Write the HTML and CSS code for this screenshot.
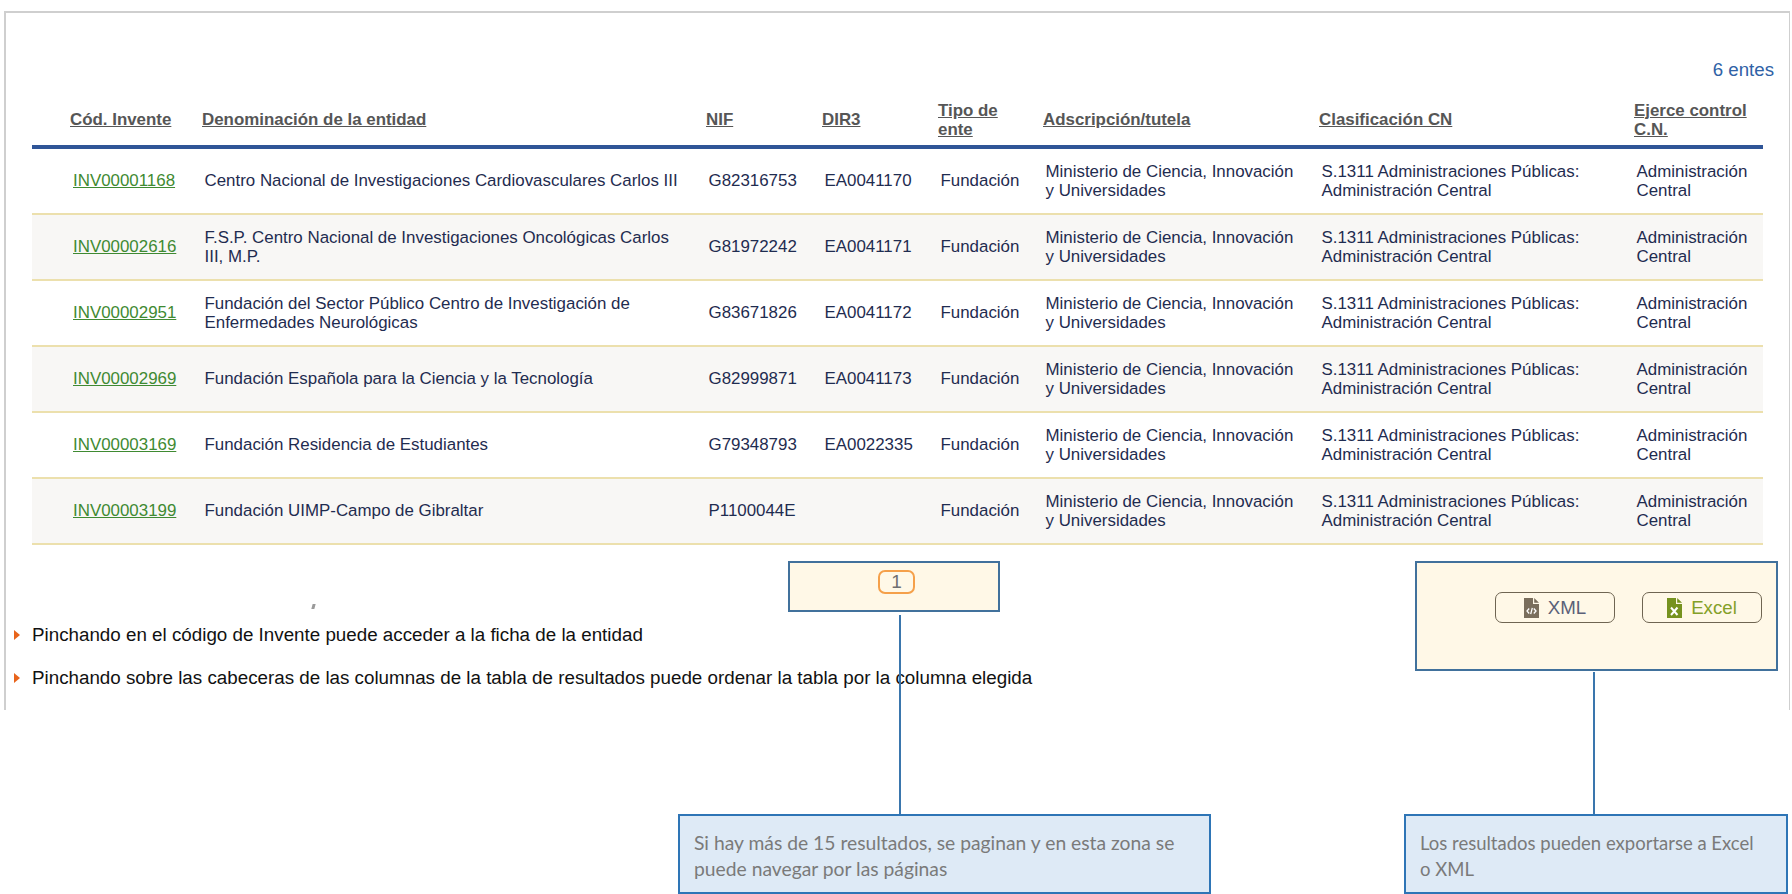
FILE: index.html
```html
<!DOCTYPE html>
<html lang="es">
<head>
<meta charset="utf-8">
<title>Resultados</title>
<link rel="stylesheet" href="styles.css">
</head>
<body>
<main class="frame">
  <p class="count">6 entes</p>
  <table class="results">
    <colgroup>
      <col class="c1"><col class="c2"><col class="c3"><col class="c4"><col class="c5"><col class="c6"><col class="c7"><col class="c8">
    </colgroup>
    <thead>
      <tr>
        <th><a href="#">Cód. Invente</a></th>
        <th><a href="#">Denominación de la entidad</a></th>
        <th><a href="#">NIF</a></th>
        <th><a href="#">DIR3</a></th>
        <th><a href="#">Tipo de ente</a></th>
        <th><a href="#">Adscripción/tutela</a></th>
        <th><a href="#">Clasificación CN</a></th>
        <th><a href="#">Ejerce control C.N.</a></th>
      </tr>
    </thead>
    <tbody>
      <tr><td><a href="#">INV00001168</a></td><td>Centro Nacional de Investigaciones Cardiovasculares Carlos III</td><td>G82316753</td><td>EA0041170</td><td>Fundación</td><td>Ministerio de Ciencia, Innovación y Universidades</td><td>S.1311 Administraciones Públicas: Administración Central</td><td>Administración Central</td></tr>
      <tr><td><a href="#">INV00002616</a></td><td>F.S.P. Centro Nacional de Investigaciones Oncológicas Carlos III, M.P.</td><td>G81972242</td><td>EA0041171</td><td>Fundación</td><td>Ministerio de Ciencia, Innovación y Universidades</td><td>S.1311 Administraciones Públicas: Administración Central</td><td>Administración Central</td></tr>
      <tr><td><a href="#">INV00002951</a></td><td>Fundación del Sector Público Centro de Investigación de Enfermedades Neurológicas</td><td>G83671826</td><td>EA0041172</td><td>Fundación</td><td>Ministerio de Ciencia, Innovación y Universidades</td><td>S.1311 Administraciones Públicas: Administración Central</td><td>Administración Central</td></tr>
      <tr><td><a href="#">INV00002969</a></td><td>Fundación Española para la Ciencia y la Tecnología</td><td>G82999871</td><td>EA0041173</td><td>Fundación</td><td>Ministerio de Ciencia, Innovación y Universidades</td><td>S.1311 Administraciones Públicas: Administración Central</td><td>Administración Central</td></tr>
      <tr><td><a href="#">INV00003169</a></td><td>Fundación Residencia de Estudiantes</td><td>G79348793</td><td>EA0022335</td><td>Fundación</td><td>Ministerio de Ciencia, Innovación y Universidades</td><td>S.1311 Administraciones Públicas: Administración Central</td><td>Administración Central</td></tr>
      <tr><td><a href="#">INV00003199</a></td><td>Fundación UIMP-Campo de Gibraltar</td><td>P1100044E</td><td></td><td>Fundación</td><td>Ministerio de Ciencia, Innovación y Universidades</td><td>S.1311 Administraciones Públicas: Administración Central</td><td>Administración Central</td></tr>
    </tbody>
  </table>
  <ul class="notes">
    <li>Pinchando en el código de Invente puede acceder a la ficha de la entidad</li>
    <li>Pinchando sobre las cabeceras de las columnas de la tabla de resultados puede ordenar la tabla por la columna elegida</li>
  </ul>
</main>

<span class="speck"></span>

<div class="highlight pager-box"><span class="page-chip">1</span></div>
<div class="highlight export-box">
  <a class="export xml" href="#">
    <svg class="file-icon" viewBox="0 0 15 20" aria-hidden="true"><path fill="#7a6e5c" d="M0 0h9v6h6v14H0z"/><path fill="#7a6e5c" d="M10.2 0 15 4.8h-4.8z"/><path fill="none" stroke="#fff" stroke-width="1.3" d="M5.2 10.5 3 13l2.200 2.500M9.800 10.500 12 13l-2.200 2.500M8.300 9.800l-1.600 6.400"/></svg>
    XML
  </a>
  <a class="export excel" href="#">
    <svg class="file-icon" viewBox="0 0 15 20" aria-hidden="true"><path fill="#76921f" d="M0 0h9v6h6v14H0z"/><path fill="#76921f" d="M10.2 0 15 4.800h-4.800z"/><path fill="none" stroke="#fff" stroke-width="2" d="m4 9.500 6.500 7.500M10.500 9.500 4 17"/></svg>
    Excel
  </a>
</div>

<span class="connector conn-pager"></span>
<span class="connector conn-export"></span>

<aside class="callout callout-pager">Si hay más de 15 resultados, se paginan y en esta zona se puede navegar por las páginas</aside>
<aside class="callout callout-export">Los resultados pueden exportarse a Excel o XML</aside>
</body>
</html>
```

FILE: styles.css
```css
* { box-sizing: border-box; }
html, body { margin: 0; padding: 0; background: #fff; }
body {
  position: relative;
  width: 1792px;
  height: 894px;
  overflow: hidden;
  font-family: "Liberation Sans", Arial, sans-serif;
}

.frame {
  margin: 11px 2px 0 4px;
  height: 699px;
  padding: 0 15px 0 26px;
  border: 2px solid #cfcfcf;
  border-bottom: 0;
  border-right-width: 1px;
}

.count {
  margin: 0;
  padding-top: 47px;
  height: 80px;
  line-height: 20px;
  font-size: 18.7px;
  text-align: right;
  color: #2f62a6;
}

.results {
  width: 1731px;
  table-layout: fixed;
  border-collapse: separate;
  border-spacing: 0;
  font-size: 16.9px;
  line-height: 19.4px;
  color: #1f2c50;
}
.c1 { width: 168px; }
.c2 { width: 504px; }
.c3 { width: 116px; }
.c4 { width: 116px; }
.c5 { width: 105px; }
.c6 { width: 276px; }
.c7 { width: 315px; }
.c8 { width: 131px; }

.results th {
  height: 56px;
  padding: 2px 2px 0;
  text-align: left;
  vertical-align: middle;
  font-weight: bold;
  border-bottom: 4px solid #2f5597;
}
.results th a { color: #565656; }
.results th:first-child { padding-left: 38px; }
.results th:nth-child(5) { padding-right: 14px; }
.results td {
  height: 66px;
  padding: 0 4.5px;
  vertical-align: middle;
  border-bottom: 2px solid #ece0ad;
}
.results td:first-child { padding-left: 41px; }
.results td:nth-child(2) { padding-right: 19px; }
.results td:nth-child(6) { padding-right: 17px; }
.results td a { color: #3f8a32; }
.results tbody tr:nth-child(even) td { background: #f8f7f5; }

.notes {
  list-style: none;
  margin: 80px 0 0 -18px;
  padding: 0;
  display: flex;
  flex-direction: column;
  gap: 23px;
  font-size: 18.8px;
  line-height: 20px;
  color: #111;
}
.notes li {
  display: flex;
  align-items: center;
  gap: 12px;
  white-space: nowrap;
}
.notes li::before {
  content: "";
  flex: none;
  border-left: 6px solid #e8641b;
  border-top: 5px solid transparent;
  border-bottom: 5px solid transparent;
}

.speck {
  position: absolute;
  left: 312px;
  top: 604px;
  width: 3px;
  height: 5px;
  background: #9a9a9a;
  transform: skewX(-15deg);
}

.highlight {
  position: absolute;
  background: #fff8e7;
  border: 2px solid #41719c;
}
.pager-box {
  left: 788px;
  top: 561px;
  width: 212px;
  height: 51px;
  display: flex;
  justify-content: center;
  align-items: flex-start;
  padding-top: 7px;
}
.page-chip {
  width: 37px;
  height: 24px;
  margin-left: 5px;
  border: 2px solid #f5a04a;
  border-radius: 7px;
  color: #6f6f70;
  font-size: 19px;
  line-height: 20px;
  text-align: center;
}

.export-box {
  left: 1415px;
  top: 561px;
  width: 363px;
  height: 110px;
  display: flex;
  justify-content: flex-end;
  align-items: flex-start;
  gap: 27px;
  padding: 29px 14px 0 0;
}
.export {
  width: 120px;
  height: 31px;
  display: flex;
  align-items: center;
  justify-content: center;
  gap: 9px;
  border: 1.5px solid #6f6552;
  border-radius: 7px;
  font-size: 18.7px;
  text-decoration: none;
}
.xml { color: #5a6078; }
.excel { color: #84a028; }
.file-icon { width: 15px; height: 20px; flex: none; }

.connector {
  position: absolute;
  width: 2px;
  background: #3a76ad;
}
.conn-pager { left: 899px; top: 615px; height: 200px; }
.conn-export { left: 1593px; top: 672px; height: 143px; }

.callout {
  position: absolute;
  top: 814px;
  height: 80px;
  padding: 14px 14px 0;
  background: #deeaf6;
  border: 2px solid #2e75b6;
  color: #7a7a7a;
  font-family: Lato, "Noto Sans", sans-serif;
  line-height: 26px;
}
.callout-pager { left: 678px; width: 533px; font-size: 19.3px; }
.callout-export { left: 1404px; width: 384px; font-size: 18.5px; padding-right: 30px; }
```
